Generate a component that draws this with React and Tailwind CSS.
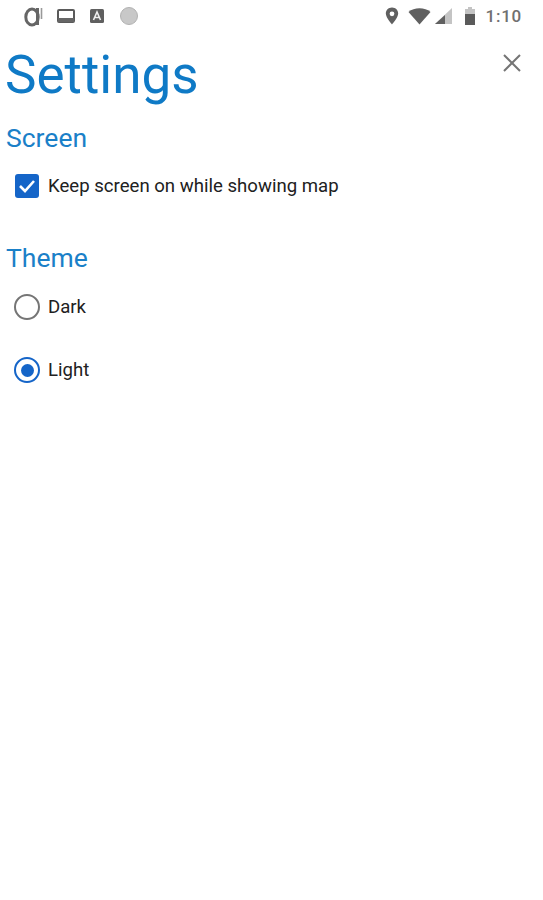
export default function App() {
  return (
    <div className="w-[543px] h-[900px] bg-white font-['Roboto',sans-serif] flex flex-col overflow-hidden">
      <div className="h-[32px] flex items-center justify-between pl-[24px] pr-[21px] text-[#6a6a6a]">
        <div className="flex items-center">
          <svg width="20" height="24" viewBox="0 0 20 24" fill="none" stroke="#666">
            <ellipse cx="8" cy="13" rx="6.2" ry="8" strokeWidth="3" />
            <path d="M13.5 4 V21" strokeWidth="3" />
            <path d="M17.5 4 V15" strokeWidth="1.6" stroke="#999" />
          </svg>
          <svg className="ml-[13px]" width="18" height="14" viewBox="0 0 18 14">
            <rect x="1" y="1" width="16" height="12" rx="1" fill="none" stroke="#5a5a5a" strokeWidth="2" />
            <rect x="1" y="9" width="16" height="4" fill="#666" />
          </svg>
          <svg className="ml-[15px]" width="14" height="14" viewBox="0 0 14 14">
            <rect width="14" height="14" rx="1.5" fill="#5f5f5f" />
            <path d="M3.5 11 L7 3 L10.5 11 M5 8.5 H9" fill="none" stroke="#eee" strokeWidth="1.6" />
          </svg>
          <div className="ml-[16px] w-[18px] h-[18px] rounded-full bg-[#c8c8c8] border border-[#b2b2b2]" />
        </div>
        <div className="flex items-center">
          <svg width="14" height="18" viewBox="0 0 14 18">
            <path fillRule="evenodd" d="M7 0.5 C3.2 0.5 0.8 3.3 0.8 6.6 C0.8 10.6 7 17.5 7 17.5 C7 17.5 13.2 10.6 13.2 6.6 C13.2 3.3 10.8 0.5 7 0.5 Z M7 4.4 A2.4 2.4 0 1 1 7 9.2 A2.4 2.4 0 1 1 7 4.4 Z" fill="#606060" />
          </svg>
          <svg className="ml-[9px]" width="23" height="17" viewBox="0 0 23 17">
            <path d="M0.5 4 C6 -1 17 -1 22.5 4 L11.5 16.5 Z" fill="#606060" />
          </svg>
          <svg className="ml-[3px]" width="19" height="18" viewBox="0 0 19 18">
            <path d="M18 1 V17 H1 Z" fill="#c4c4c4" />
            <path d="M11 8 V17 H1 Z" fill="#606060" />
          </svg>
          <svg className="ml-[11px]" width="12" height="18" viewBox="0 0 12 18">
            <path d="M4 0 H8 V2 H11 V18 H1 V2 H4 Z" fill="#c4c4c4" />
            <rect x="1" y="7" width="10" height="11" fill="#5a5a5a" />
          </svg>
          <span className="ml-[10px] text-[17px] leading-none tracking-[0.75px] font-medium text-[#707070]">1:10</span>
        </div>
      </div>
      <div className="flex items-start justify-between pl-[5px] pr-[21px]">
        <h1 className="text-[53px] leading-[58px] text-[#0f7ac6] mt-[14px]">Settings</h1>
        <svg className="mt-[21px]" width="20" height="20" viewBox="0 0 20 20" stroke="#757575" strokeWidth="2" fill="none">
          <path d="M2 2 L18 18 M18 2 L2 18" />
        </svg>
      </div>
      <h2 className="pl-[6px] mt-[18px] text-[26.5px] leading-[32px] text-[#1a80c8]">Screen</h2>
      <div className="flex items-center pl-[15px] mt-[20px] h-[24px]">
        <div className="w-[24px] h-[24px] rounded-[3px] bg-[#1565c8] flex items-center justify-center">
          <svg width="18" height="16" viewBox="0 0 18 16" fill="none" stroke="#fff" strokeWidth="2.6">
            <path d="M2 8 L7 13 L16 3" />
          </svg>
        </div>
        <span className="ml-[9px] text-[18.6px] leading-[24px] text-[#212121]">Keep screen on while showing map</span>
      </div>
      <h2 className="pl-[6px] mt-[44px] text-[26.5px] leading-[32px] text-[#1a80c8]">Theme</h2>
      <div className="flex items-center pl-[14px] mt-[20px] h-[26px]">
        <div className="w-[26px] h-[26px] rounded-full border-2 border-[#757575]" />
        <span className="ml-[8px] text-[18.6px] leading-[24px] text-[#212121]">Dark</span>
      </div>
      <div className="flex items-center pl-[14px] mt-[37px] h-[26px]">
        <div className="w-[26px] h-[26px] rounded-full border-2 border-[#1565c8] flex items-center justify-center">
          <div className="w-[13px] h-[13px] rounded-full bg-[#1565c8]" />
        </div>
        <span className="ml-[8px] text-[18.6px] leading-[24px] text-[#212121]">Light</span>
      </div>
    </div>
  );
}
